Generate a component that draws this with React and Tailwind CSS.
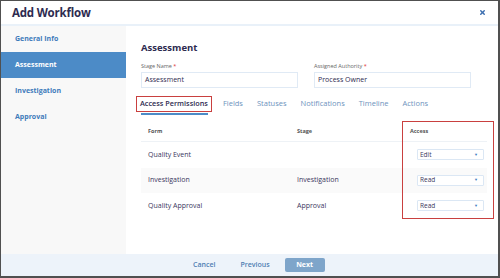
import React from "react";
import { X } from "lucide-react";

const steps = ["General Info", "Assessment", "Investigation", "Approval"];
const tabs = ["Access Permissions", "Fields", "Statuses", "Notifications", "Timeline", "Actions"];
const rows = [
  { form: "Quality Event", stage: "", access: "Edit" },
  { form: "Investigation", stage: "Investigation", access: "Read" },
  { form: "Quality Approval", stage: "Approval", access: "Read" },
];

function Select({ value }) {
  return (
    <div className="w-[67px] h-[11px] border border-[#dbe7f4] rounded-[1px] bg-white flex items-center justify-between pl-[2px] pr-[5px]">
      <span className="text-[6.5px] text-[#3a3760]">{value}</span>
      <span className="text-[4px] text-[#3d7cc0]">▼</span>
    </div>
  );
}

export default function App() {
  return (
    <div
      className="w-[500px] h-[278px] flex flex-col bg-white border-l border-t border-r-2 border-b-2 border-[#505050] overflow-hidden"
      style={{ fontFamily: '"Open Sans", "Liberation Sans", sans-serif' }}
    >
      {/* header */}
      <div className="h-[25px] shrink-0 flex items-center justify-between pl-[11px] pr-[12px] border-b-2 border-[#e9f1f9]">
        <span className="text-[11.5px] font-bold text-[#2e2b50] tracking-[-0.2px]">Add Workflow</span>
        <X className="w-[7px] h-[7px] text-[#3d6fb0]" strokeWidth={5} />
      </div>

      <div className="flex flex-1 min-h-0">
        {/* sidebar */}
        <div className="w-[125px] shrink-0 bg-[#f8f8f8] flex flex-col">
          {steps.map((s) => (
            <div
              key={s}
              className={
                s === "Assessment"
                  ? "h-[26px] flex items-center pl-[14px] bg-[#4c8bc7] text-white text-[7px] font-bold"
                  : "h-[26px] flex items-center pl-[14px] text-[#3f7bbb] text-[7px] font-bold"
              }
            >
              {s}
            </div>
          ))}
        </div>

        {/* content */}
        <div className="relative flex-1 pl-[15px] pr-[12px] pt-[16px]">
          <div className="text-[9.5px] font-bold text-[#2e2b50] leading-[12px]">Assessment</div>

          <div className="flex gap-[16px] mt-[8px]">
            <div className="flex flex-col">
              <span className="text-[5.5px] text-[#666] leading-[8px]">
                Stage Name <span className="text-[#d33]">*</span>
              </span>
              <div className="w-[157px] h-[16px] mt-[2px] border border-[#e0eaf5] flex items-center pl-[3px] text-[7px] text-[#2e2b50]">
                Assessment
              </div>
            </div>
            <div className="flex flex-col">
              <span className="text-[5.5px] text-[#666] leading-[8px]">
                Assigned Authority <span className="text-[#d33]">*</span>
              </span>
              <div className="w-[157px] h-[16px] mt-[2px] border border-[#e0eaf5] flex items-center pl-[3px] text-[7px] text-[#2e2b50]">
                Process Owner
              </div>
            </div>
          </div>

          {/* tabs */}
          <div className="flex items-center gap-[14px] mt-[7px] h-[17px]">
            {tabs.map((t, i) =>
              i === 0 ? (
                <div key={t} className="relative -ml-[5px] -mr-[3px] px-[3px] h-[16px] flex items-center border-[1.5px] border-[#c9403f]">
                  <span className="text-[7.3px] text-[#2e2b50] font-semibold">{t}</span>
                  <div className="absolute left-[4px] right-[3px] -bottom-[4px] h-[2px] bg-[#4c8bc7]" />
                </div>
              ) : (
                <span key={t} className="text-[7.5px] text-[#6e93bd]">
                  {t}
                </span>
              )
            )}
          </div>

          {/* table */}
          <div className="mt-[10px] w-[346px] text-[7px] text-[#3a3760]">
            <div className="h-[20px] flex items-center border-b border-[#eef2f6] text-[5.5px] font-bold text-[#555]">
              <span className="w-[156px] pl-[7px]">Form</span>
              <span className="w-[113px]">Stage</span>
              <span>Access</span>
            </div>
            {rows.map((r, i) => (
              <div key={r.form} className={`h-[25.5px] flex items-center ${i === 1 ? "bg-[#fafafa]" : ""}`}>
                <span className="w-[156px] pl-[7px]">{r.form}</span>
                <span className="w-[120px]">{r.stage}</span>
                <Select value={r.access} />
              </div>
            ))}
          </div>

          {/* highlight box */}
          <div className="absolute left-[276px] top-[95px] w-[92px] h-[98px] border-[1.5px] border-[#c9403f] pointer-events-none" />
        </div>
      </div>

      {/* footer */}
      <div className="h-[22px] shrink-0 bg-[#edf3fa] flex items-center pl-[192px] text-[7px]">
        <span className="text-[#4f7eb3] font-semibold">Cancel</span>
        <span className="ml-[25px] text-[#4f7eb3] font-semibold">Previous</span>
        <div className="ml-[15px] w-[40px] h-[14px] rounded-[2px] bg-[#7ea5ca] text-white font-bold flex items-center justify-center">
          Next
        </div>
      </div>
    </div>
  );
}
